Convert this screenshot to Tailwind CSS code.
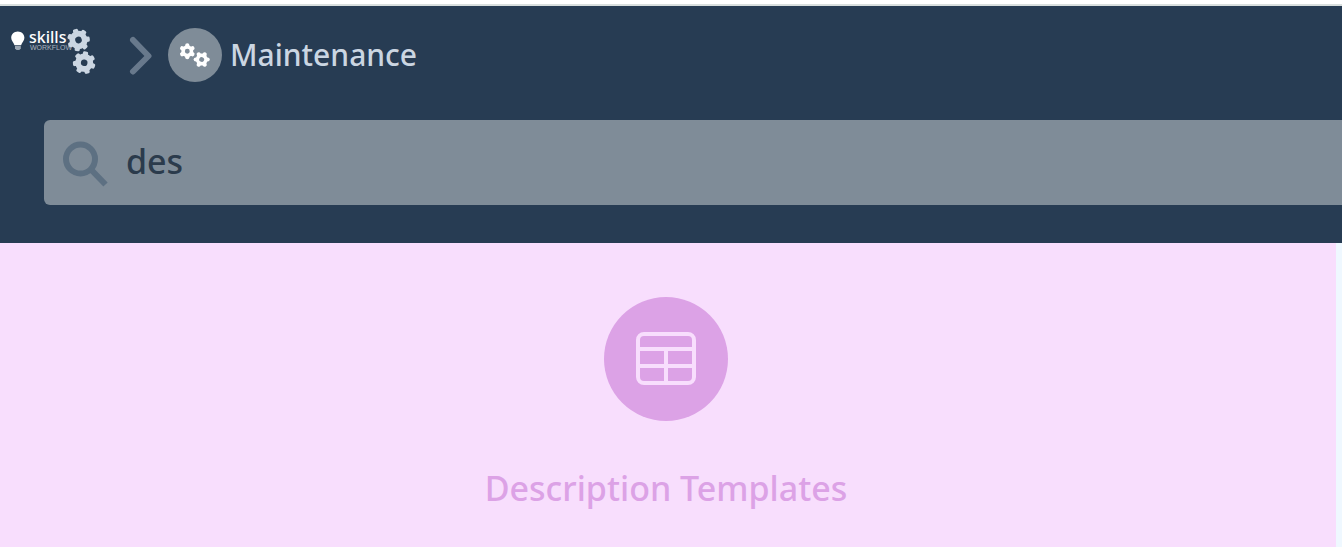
<!DOCTYPE html>
<html lang="en">
<head>
<meta charset="utf-8">
<meta name="viewport" content="width=device-width, initial-scale=1">
<title>Maintenance</title>
<script src="https://cdn.jsdelivr.net/npm/@tailwindcss/browser@4"></script>
</head>
<body class="bg-white font-['Noto_Sans',sans-serif] font-medium">
<svg class="hidden" aria-hidden="true">
  <defs>
    <g id="gear6">
      <circle r="6" fill="none" stroke="currentColor" stroke-width="5"/>
      <g stroke="currentColor" stroke-width="6" stroke-linecap="round">
        <path d="M0-8.500V-7.500"/><path d="M0-8.500V-7.500" transform="rotate(60)"/><path d="M0-8.500V-7.500" transform="rotate(120)"/><path d="M0-8.500V-7.500" transform="rotate(180)"/><path d="M0-8.500V-7.500" transform="rotate(240)"/><path d="M0-8.500V-7.500" transform="rotate(300)"/>
      </g>
    </g>
    <g id="gear7">
      <circle r="6.200" fill="none" stroke="currentColor" stroke-width="5.800"/>
      <g fill="currentColor">
        <rect x="-2.600" y="-11.300" width="5.200" height="5" rx="1.500"/><rect x="-2.600" y="-11.300" width="5.200" height="5" rx="1.500" transform="rotate(51.43)"/><rect x="-2.600" y="-11.300" width="5.200" height="5" rx="1.500" transform="rotate(102.86)"/><rect x="-2.600" y="-11.300" width="5.200" height="5" rx="1.500" transform="rotate(154.29)"/><rect x="-2.600" y="-11.300" width="5.200" height="5" rx="1.500" transform="rotate(205.71)"/><rect x="-2.600" y="-11.300" width="5.200" height="5" rx="1.500" transform="rotate(257.14)"/><rect x="-2.600" y="-11.300" width="5.200" height="5" rx="1.500" transform="rotate(308.57)"/>
      </g>
    </g>
  </defs>
</svg>
<header class="mt-1 overflow-hidden border-t-2 border-[#d9dfde] bg-[#273c53] pb-[38px]">
  <nav class="flex h-[98px] items-center pl-2" aria-label="Breadcrumb">
    <a href="#" class="shrink-0 pb-1.5" aria-label="Skills Workflow">
      <svg class="h-[52px] w-[92px]" viewBox="8 26 92 52">
        <path fill="#fff" d="M17.800 31.500c-3.800 0-6.600 2.800-6.600 6.300 0 3.200 2.400 4.500 3.300 7.500h6.600c.9-3 3.300-4.300 3.300-7.500 0-3.500-2.800-6.300-6.600-6.300z"/>
        <path fill="#9aa6b3" d="M15 46h5.800v2.500l-1.500 1.500h-2.800l-1.500-1.500z"/>
        <text x="29" y="43" font-size="16" fill="#fff" class="font-['Noto_Sans',sans-serif] font-medium">skills</text>
        <text x="30" y="50" font-size="7" fill="#aab4bf" class="font-['Liberation_Sans',sans-serif] font-normal">WORKFLOW</text>
        <g color="#cbd6e2">
          <use href="#gear7" transform="translate(78.500 40) rotate(-18)"/>
          <use href="#gear7" transform="translate(84.200 62.700) rotate(8)"/>
        </g>
      </svg>
    </a>
    <svg class="ml-7 h-10 w-6 shrink-0" viewBox="0 0 24 40" fill="none" stroke="#68798c" stroke-width="6" stroke-linecap="round" stroke-linejoin="round" aria-hidden="true"><path d="M5 5 20.500 21 5 36.500"/></svg>
    <a href="#" class="ml-4 flex items-center gap-2 text-[#cbd6e2]">
      <svg class="size-[54px] shrink-0" viewBox="0 0 54 54" aria-hidden="true">
        <circle cx="27" cy="27" r="27" fill="#7f8c98"/>
        <g color="#fff">
          <use href="#gear6" transform="translate(19.300 23.200) scale(.7)"/>
          <use href="#gear6" transform="translate(33.700 31.500) rotate(30) scale(.7)"/>
        </g>
      </svg>
      <span class="text-[30px] leading-10">Maintenance</span>
    </a>
  </nav>
  <div class="mt-4 ml-11 flex h-[85px] items-center rounded-l-md bg-[#7f8c98] pl-[18px]">
    <label for="search" aria-label="Search">
      <svg class="mt-0.5 size-[46px] shrink-0" viewBox="0 0 46 46" fill="none" stroke="#5d7082" stroke-width="6" aria-hidden="true"><circle cx="18.500" cy="18" r="14.500"/><path d="M28.500 28 43.500 43.500"/></svg>
    </label>
    <input id="search" type="text" value="des" aria-label="Search" class="ml-[18px] h-full min-w-0 flex-1 bg-transparent pb-1 text-[34px] text-[#2b3b4c] outline-none">
  </div>
</header>
<main class="bg-[#eff8ff] pr-1.5">
  <a href="#" class="flex flex-col items-center bg-[#f8defd] pt-[54px] pr-1 pb-[34px] text-[#dca2e6]">
    <svg class="size-[124px]" viewBox="0 0 124 124" fill="none" aria-hidden="true">
      <circle cx="62" cy="62" r="62" fill="currentColor"/>
      <g stroke="#f8defd" stroke-width="4"><rect x="34" y="37" width="56" height="49" rx="6"/><path d="M34 52h56M34 69h56M62 52v34"/></g>
    </svg>
    <span class="mt-[42px] text-[34px] leading-[50px]">Description Templates</span>
  </a>
</main>
</body>
</html>
